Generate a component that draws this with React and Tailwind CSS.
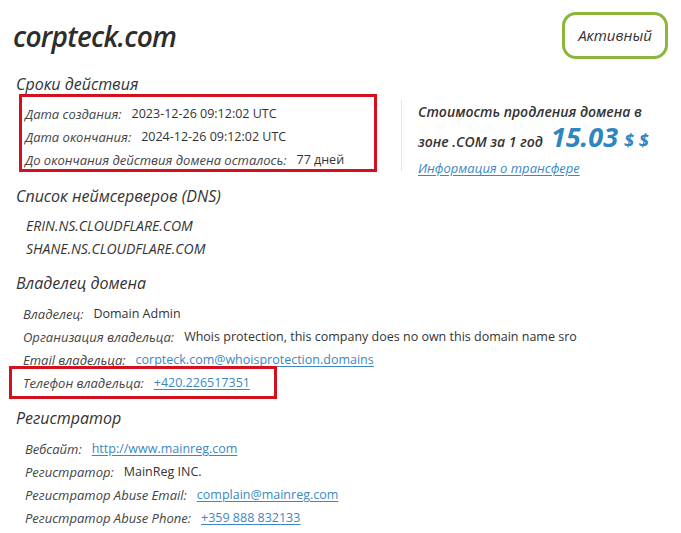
import React from 'react';

const font = { fontFamily: '"Open Sans", "Noto Sans", sans-serif' };

const Row = ({ label, children, pl = 'pl-[12px]' }) => (
  <div className={`h-[23px] flex items-center ${pl}`}>
    <span className="italic text-[13px] text-[#444]">{label}</span>
    <span className="ml-[10px] text-[12.5px] text-[#333]">{children}</span>
  </div>
);

const A = ({ children }) => (
  <a href="#" className="text-[#3b88c3] underline underline-offset-2">{children}</a>
);

const Heading = ({ children, className = '' }) => (
  <h2 className={`h-[22px] flex items-center pl-[3px] text-[16px] italic text-[#333] ${className}`}>{children}</h2>
);

const App = () => {
  return (
    <div className="relative w-[681px] h-[533px] bg-white px-[13px] overflow-hidden" style={font}>
      {/* Header */}
      <header className="flex justify-between items-center pt-[12px]">
        <h1 className="text-[28px] italic font-semibold text-[#2d2d2d] tracking-tight">corpteck.com</h1>
        <div className="w-[106px] h-[47px] rounded-[14px] border-[3px] border-[#8db53c] flex items-center justify-center text-[15px] italic text-[#333]">
          Активный
        </div>
      </header>

      {/* Сроки */}
      <Heading className="mt-[14px]">Сроки действия</Heading>
      <div className="flex mt-[8px]">
        <div className="w-[375px]">
          <Row label="Дата создания:">2023-12-26 09:12:02 UTC</Row>
          <Row label="Дата окончания:">2024-12-26 09:12:02 UTC</Row>
          <Row label="До окончания действия домена осталось:">77 дней</Row>
        </div>
        <div className="ml-[13px] -mt-[3px] h-[71px] border-l border-[#e6e6e6] pl-[16px]">
          <p className="text-[14px] font-semibold italic text-[#333] leading-[24px]">Стоимость продления домена в</p>
          <p className="flex items-baseline text-[14px] font-semibold italic text-[#333] leading-[26px]">
            зоне .COM за 1 год
            <span className="ml-[8px] text-[27px] font-bold text-[#2e86c1] leading-[26px]">15.03</span>
            <span className="ml-[6px] text-[18px] font-bold text-[#2e86c1]">$ $</span>
          </p>
          <a href="#" className="text-[13px] italic text-[#3b88c3] underline underline-offset-2 leading-[22px]">Информация о трансфере</a>
        </div>
      </div>

      {/* DNS */}
      <Heading className="mt-[13px]">Список неймсерверов (DNS)</Heading>
      <div className="mt-[7px] pl-[13px] text-[14px] italic text-[#333]">
        <div className="h-[23px] flex items-center">ERIN.NS.CLOUDFLARE.COM</div>
        <div className="h-[23px] flex items-center">SHANE.NS.CLOUDFLARE.COM</div>
      </div>

      {/* Владелец */}
      <Heading className="mt-[12px]">Владелец домена</Heading>
      <div className="mt-[9px]">
        <Row label="Владелец:" pl="pl-[10px]">Domain Admin</Row>
        <Row label="Организация владельца:" pl="pl-[10px]">Whois protection, this company does no own this domain name sro</Row>
        <Row label="Email владельца:" pl="pl-[10px]"><A>corpteck.com@whoisprotection.domains</A></Row>
        <Row label="Телефон владельца:" pl="pl-[10px]"><A>+420.226517351</A></Row>
      </div>

      {/* Регистратор */}
      <Heading className="mt-[12px]">Регистратор</Heading>
      <div className="mt-[9px]">
        <Row label="Вебсайт:">
          <A>http://www.mainreg.com</A>
        </Row>
        <Row label="Регистратор:">MainReg INC.</Row>
        <Row label="Регистратор Abuse Email:"><A>complain@mainreg.com</A></Row>
        <Row label="Регистратор Abuse Phone:"><A>+359 888 832133</A></Row>
      </div>

      {/* annotation boxes */}
      <div className="absolute left-[19px] top-[94px] w-[358px] h-[78px] border-[3px] border-[#d3111c] pointer-events-none" />
      <div className="absolute left-[9px] top-[366px] w-[268px] h-[33px] border-[3px] border-[#d3111c] pointer-events-none" />
    </div>
  );
};

export default App;
